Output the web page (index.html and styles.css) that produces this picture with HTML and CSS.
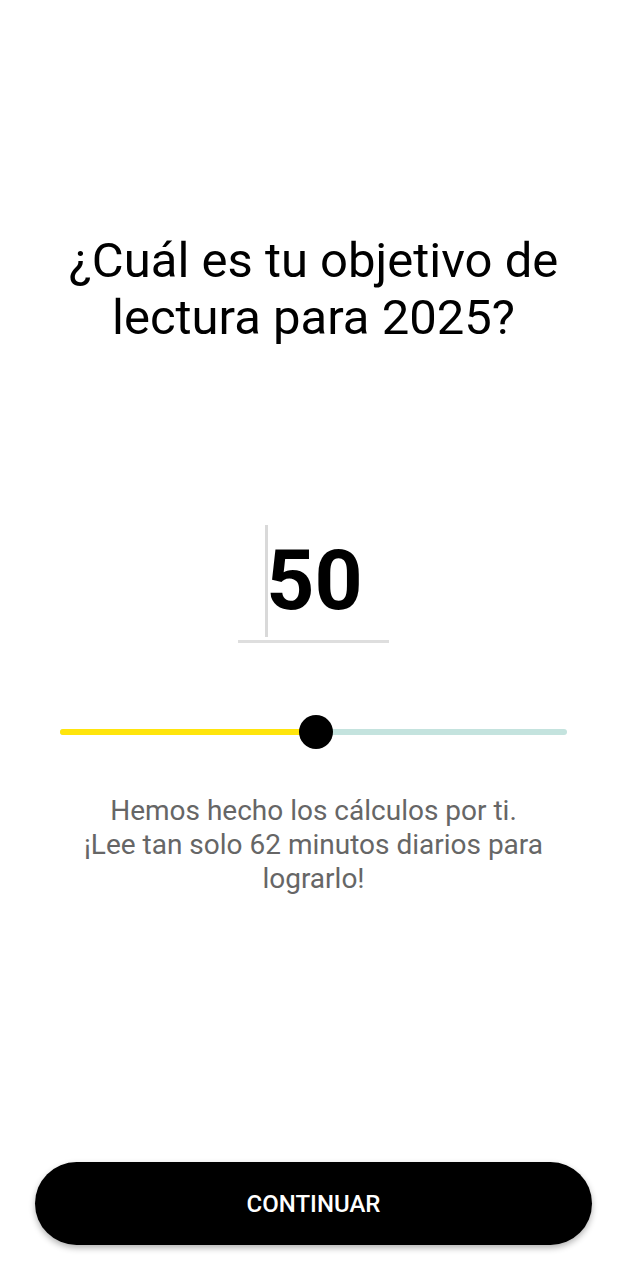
FILE: index.html
```html
<!DOCTYPE html>
<html lang="es">
<head>
<meta charset="utf-8">
<link rel="stylesheet" href="styles.css">
</head>
<body>
<main class="screen">
  <h1 class="title">¿Cuál es tu objetivo de lectura para 2025?</h1>
  <div class="goal">
    <div class="goal-field">
      <span class="caret"></span>
      <span class="goal-value">50</span>
    </div>
  </div>
  <div class="slider">
    <div class="track">
      <div class="fill" style="width: 50.5%"></div>
      <div class="thumb" style="left: 50.5%"></div>
    </div>
  </div>
  <p class="hint">Hemos hecho los cálculos por ti.<br>¡Lee tan solo 62 minutos diarios para lograrlo!</p>
  <div class="spacer"></div>
  <button class="cta">CONTINUAR</button>
</main>
</body>
</html>
```

FILE: styles.css
```css
* { box-sizing: border-box; }
html, body { margin: 0; padding: 0; background: #fff; }
body { font-family: Roboto, "Noto Sans", Arial, sans-serif; }
.screen {
  height: 1280px;
  display: flex;
  flex-direction: column;
  align-items: center;
}
.title {
  margin: 232px 0 0;
  width: 560px;
  font-size: 49px;
  font-weight: 400;
  line-height: 57px;
  text-align: center;
  color: #000;
}
.goal {
  margin-top: 179px;
  display: flex;
  justify-content: center;
}
.goal-field {
  position: relative;
  width: 151px;
  height: 118px;
  border-bottom: 3px solid #dedede;
  display: flex;
  justify-content: center;
  align-items: center;
}
.caret {
  position: absolute;
  left: 27px;
  top: 0;
  width: 3px;
  height: 112px;
  background: #d9d9d9;
}
.goal-value {
  font-size: 84px;
  font-weight: 700;
  color: #000;
  line-height: 1;
  margin-left: 2px;
  margin-top: -3px;
}
.slider {
  margin-top: 72px;
  width: 507px;
  height: 34px;
  display: flex;
  align-items: center;
}
.track {
  position: relative;
  width: 100%;
  height: 6px;
  border-radius: 3px;
  background: #c4e3de;
}
.fill {
  height: 100%;
  border-radius: 3px;
  background: #ffe50c;
}
.thumb {
  position: absolute;
  top: 50%;
  width: 34px;
  height: 34px;
  border-radius: 50%;
  background: #000;
  transform: translate(-50%, -50%);
}
.hint {
  margin: 45px 0 0;
  width: 520px;
  font-size: 28px;
  line-height: 34px;
  color: #666;
  text-align: center;
}
.spacer { flex: 1; }
.cta {
  width: 557px;
  height: 83px;
  margin-bottom: 35px;
  border: 0;
  border-radius: 42px;
  background: #000;
  color: #fff;
  font-family: Roboto, "Noto Sans", Arial, sans-serif;
  font-size: 24px;
  font-weight: 500;
  box-shadow: 0 3px 6px rgba(0,0,0,0.3);
}
```
